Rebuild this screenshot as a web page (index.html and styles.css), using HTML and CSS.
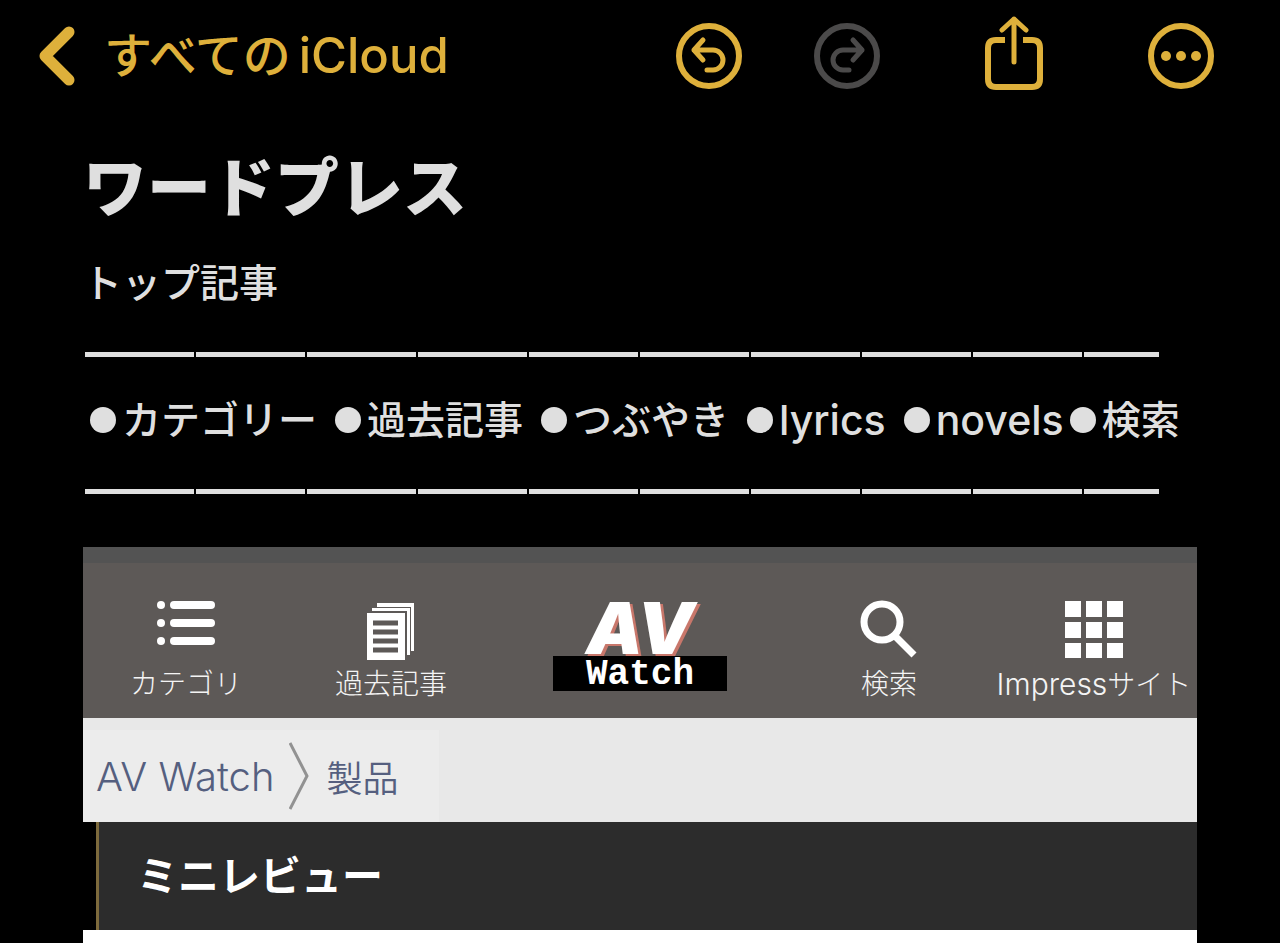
FILE: index.html
```html
<!DOCTYPE html>
<html lang="ja">
<head>
    <meta charset="UTF-8">
    <meta name="viewport" content="width=device-width, initial-scale=1.0">
    <title>ワードプレス</title>
    <link rel="stylesheet" href="styles.css">
</head>
<body>
    <header class="toolbar">
        <a class="back" href="#">
            <svg width="38" height="60" viewBox="0 0 38 60" fill="none" stroke="currentColor" stroke-width="11" stroke-linecap="round" stroke-linejoin="round"><path d="M31 6 L7 30 L31 54"/></svg>
            <span class="back-label">すべての<span class="latin">iCloud</span></span>
        </a>
        <div class="actions">
            <div class="history">
                <button class="icon-btn" aria-label="取り消す">
                    <svg width="66" height="66" viewBox="0 0 66 66" fill="none" stroke="currentColor" stroke-linecap="round" stroke-linejoin="round">
                        <circle cx="33" cy="33" r="30" stroke-width="6"/>
                        <path d="M27 17 L18 27 L27 37 M18 27 H37 A10 10 0 0 1 37 47 H31" stroke-width="5"/>
                    </svg>
                </button>
                <button class="icon-btn" aria-label="やり直す" disabled>
                    <svg width="66" height="66" viewBox="0 0 66 66" fill="none" stroke="currentColor" stroke-linecap="round" stroke-linejoin="round">
                        <circle cx="33" cy="33" r="30" stroke-width="6"/>
                        <path d="M39 17 L48 27 L39 37 M48 27 H29 A10 10 0 0 0 29 47 H35" stroke-width="5"/>
                    </svg>
                </button>
            </div>
            <button class="icon-btn share" aria-label="共有">
                <svg width="58" height="74" viewBox="0 0 58 74" fill="none" stroke="currentColor">
                    <path d="M20 24 H11 Q3 24 3 32 V63 Q3 71 11 71 H47 Q55 71 55 63 V32 Q55 24 47 24 H38" stroke-width="6"/>
                    <path d="M29 46 V3 M17 14 L29 3 L41 14" stroke-width="5" stroke-linecap="round" stroke-linejoin="round"/>
                </svg>
            </button>
            <button class="icon-btn" aria-label="その他">
                <svg width="66" height="66" viewBox="0 0 66 66" fill="currentColor">
                    <circle cx="33" cy="33" r="30" fill="none" stroke="currentColor" stroke-width="6"/>
                    <circle cx="18" cy="33" r="5"/>
                    <circle cx="33" cy="33" r="5"/>
                    <circle cx="48" cy="33" r="5"/>
                </svg>
            </button>
        </div>
    </header>

    <main class="note">
        <h1 class="title">ワードプレス</h1>
        <p class="subtitle">トップ記事</p>
        <hr class="rule">
        <ul class="topics">
            <li>カテゴリー</li>
            <li>過去記事</li>
            <li>つぶやき</li>
            <li class="latin-topic">lyrics</li>
            <li class="latin-topic">novels</li>
            <li>検索</li>
        </ul>
        <hr class="rule">

        <section class="site">
            <nav class="site-nav">
                <a class="nav-item" href="#">
                    <svg width="58" height="58" viewBox="0 0 58 58" fill="#fff">
                        <circle cx="4" cy="5" r="4"/><rect x="13" y="1" width="45" height="8" rx="4"/>
                        <circle cx="4" cy="23" r="4"/><rect x="13" y="19" width="45" height="8" rx="4"/>
                        <circle cx="4" cy="41" r="4"/><rect x="13" y="37" width="45" height="8" rx="4"/>
                    </svg>
                    <span>カテゴリ</span>
                </a>
                <a class="nav-item" href="#">
                    <svg width="48" height="58" viewBox="0 0 48 58">
                        <path d="M10 3 H47 V51 H44 V7 H10 Z" fill="#fff"/>
                        <path d="M5 8 H43 V55 H40 V11 H5 Z" fill="#fff"/>
                        <path d="M0 13 H38 V60 H0 Z" fill="#fff"/>
                        <path d="M6 23 H31 M6 32 H31 M6 41 H31 M6 50 H31" stroke="#5d5957" stroke-width="5"/>
                    </svg>
                    <span>過去記事</span>
                </a>
                <a class="logo" href="#">
                    <span class="logo-av">AV</span>
                    <span class="logo-watch">Watch</span>
                </a>
                <a class="nav-item" href="#">
                    <svg width="58" height="58" viewBox="0 0 58 58" fill="none" stroke="#fff">
                        <circle cx="22" cy="22" r="18" stroke-width="7"/>
                        <path d="M36 37 L54 55" stroke-width="7"/>
                    </svg>
                    <span>検索</span>
                </a>
                <a class="nav-item" href="#">
                    <svg width="58" height="58" viewBox="0 0 58 58" fill="#fff">
                        <path d="M0 1h16v16H0z M21 1h16v16H21z M42 1h16v16H42z M0 22h16v16H0z M21 22h16v16H21z M42 22h16v16H42z M0 43h16v15H0z M21 43h16v15H21z M42 43h16v15H42z"/>
                    </svg>
                    <span><span class="nav-latin">Impress</span>サイト</span>
                </a>
            </nav>
            <div class="breadcrumb">
                <div class="crumbs">
                    <a class="crumb-site" href="#">AV Watch</a>
                    <svg width="20" height="68" viewBox="0 0 20 68" fill="none" stroke="#929292" stroke-width="3"><path d="M1 1 L18 34 L1 67"/></svg>
                    <a class="crumb-page" href="#">製品</a>
                </div>
            </div>
            <h2 class="section-title">ミニレビュー</h2>
            <div class="article"></div>
        </section>
    </main>
</body>
</html>
```
FILE: styles.css
```css
* {
    margin: 0;
    padding: 0;
    box-sizing: border-box;
}

body {
    font-family: Inter, "Noto Sans CJK JP", sans-serif;
    background-color: #000;
    color: #dfdfdf;
    min-height: 100vh;
    display: flex;
    flex-direction: column;
}

a {
    color: inherit;
    text-decoration: none;
}

svg {
    display: block;
}

.toolbar {
    display: flex;
    justify-content: space-between;
    align-items: center;
    height: 112px;
    padding: 0 66px 0 38px;
    color: #deb03b;
}

.back {
    display: flex;
    align-items: center;
    gap: 28px;
    font-size: 48px;
    line-height: 56px;
    font-weight: 500;
}

.latin {
    margin-left: 8px;
    font-size: 49px;
}

.actions {
    display: flex;
    align-items: center;
    gap: 105px;
}

.history {
    display: flex;
    gap: 72px;
}

.icon-btn {
    background: none;
    border: none;
    color: inherit;
    cursor: pointer;
}

.icon-btn:disabled {
    color: #4b4a4a;
    cursor: default;
}

.share {
    padding-bottom: 6px;
}

.note {
    flex: 1;
    display: flex;
    flex-direction: column;
    padding: 34px 83px 0;
}

.title {
    font-size: 64px;
    line-height: 84px;
    font-weight: 900;
}

.subtitle {
    font-size: 39px;
    line-height: 56px;
    font-weight: 500;
    margin: 25px 0 41px;
}

/* row of long dashes */
.rule {
    width: 1074px;
    max-width: 100%;
    height: 5px;
    margin-left: 2px;
    border: none;
    background: repeating-linear-gradient(to right, #dfdfdf 0 109px, #000 109px 111px);
}

.topics {
    display: flex;
    gap: 18px;
    padding-left: 7px;
    margin: 33px 0 39px;
    font-size: 39px;
    line-height: 60px;
    font-weight: 500;
    list-style: none;
    white-space: nowrap;
}

.topics li {
    display: flex;
    align-items: center;
    gap: 6px;
}

.topics li::before {
    content: "";
    width: 26px;
    height: 26px;
    border-radius: 50%;
    background-color: #dfdfdf;
}

.topics .latin-topic {
    font-size: 41px;
}

.topics li:last-child {
    margin-left: -12px;
}

.site {
    flex: 1;
    display: flex;
    flex-direction: column;
    margin-top: 53px;
}

.site-nav {
    display: grid;
    grid-template-columns: 206fr 204fr 294fr 204fr 206fr;
    border-top: 16px solid #535353;
    background-color: #5d5957;
    height: 171px;
    padding-top: 37px;
    color: #f4f4f4;
}

.nav-item {
    display: flex;
    flex-direction: column;
    align-items: center;
    gap: 6px;
    font-size: 28px;
    line-height: 40px;
    font-weight: 300;
    white-space: nowrap;
}

.nav-item svg {
    overflow: visible;
}

.nav-latin {
    font-size: 30px;
}

.logo {
    display: flex;
    flex-direction: column;
    align-items: center;
    color: #fff;
}

.logo-av {
    font-size: 72px;
    line-height: 56px;
    font-weight: 900;
    font-style: italic;
    text-shadow: 3px 2px 0 #c8776b;
}

.logo-watch {
    width: 174px;
    height: 35px;
    background-color: #000;
    font-family: "Liberation Mono", monospace;
    font-size: 36px;
    line-height: 38px;
    font-weight: 700;
    text-align: center;
}

.breadcrumb {
    display: flex;
    height: 104px;
    padding-top: 12px;
    background-color: #e8e8e8;
}

.crumbs {
    display: flex;
    align-items: center;
    gap: 14px;
    padding: 0 40px 0 13px;
    background-color: #ececec;
    color: #555f7f;
    font-size: 36px;
}

.crumb-site {
    font-size: 40px;
    font-weight: 300;
}

.crumb-page {
    padding-left: 4px;
    font-weight: 350;
}

.section-title {
    margin-left: 13px;
    padding-left: 38px;
    border-left: 3px solid #7d6a3c;
    background-color: #2c2c2c;
    color: #fff;
    font-size: 41px;
    line-height: 108px;
    font-weight: 700;
}

.article {
    flex: 1;
    background-color: #fff;
}
```
